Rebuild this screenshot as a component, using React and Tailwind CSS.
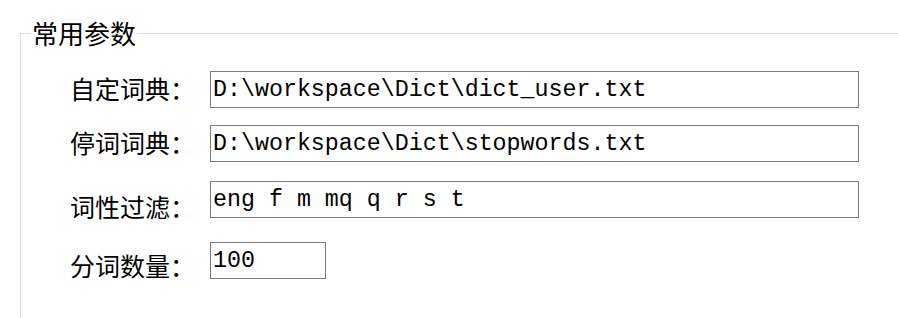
const labelFont = { fontFamily: '"Noto Sans CJK SC", sans-serif' }

const Field = ({ label, value, wide = true, className = '', labelClass = 'mt-[2px]' }) => (
  <div className={`flex h-[37px] items-start ${className}`}>
    <label
      className={`w-[140px] shrink-0 text-[25px] leading-[30px] text-black ${labelClass}`}
      style={labelFont}
    >
      {label}
    </label>
    <input
      type="text"
      readOnly
      defaultValue={value}
      className={`h-[37px] border border-[#7a7a7a] bg-white px-[2px] font-['Liberation_Mono',monospace] text-[23.3px] text-black outline-none ${
        wide ? 'w-[649px]' : 'w-[116px]'
      }`}
    />
  </div>
)

export default function App() {
  return (
    <div className="h-[318px] w-[898px] overflow-hidden bg-white pt-[17px]">
      <fieldset className="ml-[20px] h-[400px] border-l border-t border-[#dcdcdc]">
        <legend
          className="ml-[10px] px-[1px] text-[26px] leading-[32px] text-black"
          style={labelFont}
        >
          常用参数
        </legend>
        <div className="pl-[49px]">
          <Field className="mt-[22px]" label="自定词典：" value="D:\workspace\Dict\dict_user.txt" />
          <Field className="mt-[17px]" label="停词词典：" value="D:\workspace\Dict\stopwords.txt" />
          <Field
            className="mt-[19px]"
            labelClass="mt-[10px]"
            label="词性过滤："
            value="eng f m mq q r s t"
          />
          <Field
            className="mt-[24px]"
            labelClass="mt-[8px]"
            label="分词数量："
            value="100"
            wide={false}
          />
        </div>
      </fieldset>
    </div>
  )
}
